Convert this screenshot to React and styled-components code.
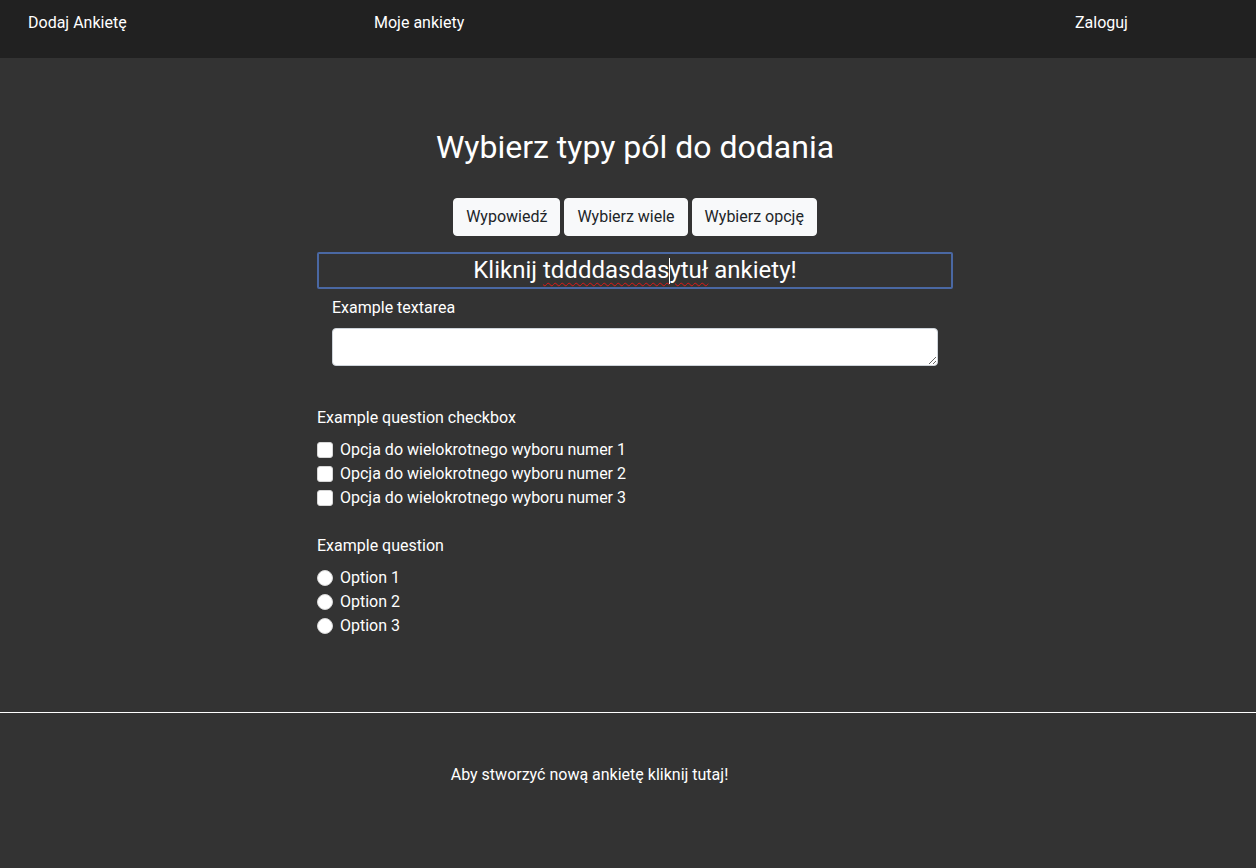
import React from "react";
import styled, { createGlobalStyle } from "styled-components";

const GlobalStyle = createGlobalStyle`
  html, body {
    margin: 0;
    padding: 0;
    background: #333333;
  }
  body {
    font-family: Roboto, "Liberation Sans", sans-serif;
    font-size: 16px;
    line-height: 24px;
    color: #ffffff;
  }
  * { box-sizing: border-box; }
`;

const Header = styled.header`
  height: 58px;
  background: #212121;
  display: grid;
  grid-template-columns: 346px 701px auto;
  padding: 11px 0 0 28px;
`;

const NavLink = styled.a`
  color: #ffffff;
  font-size: 16px;
  line-height: 24px;
  text-decoration: none;
`;

const Main = styled.main`
  padding: 70px 0 74px 317px;
`;

const Column = styled.div`
  width: 636px;
`;

const Title = styled.h2`
  margin: 0;
  font-size: 32px;
  line-height: 38px;
  font-weight: 400;
  text-align: center;
`;

const ButtonRow = styled.div`
  margin-top: 32px;
  display: flex;
  justify-content: center;
  gap: 4px;
`;

const LightButton = styled.button`
  font-family: inherit;
  font-size: 16px;
  line-height: 24px;
  padding: 6px 12px;
  height: 38px;
  color: #212529;
  background: #f8f9fa;
  border: 1px solid #f8f9fa;
  border-radius: 4px;
`;

const TitleField = styled.div`
  margin-top: 16px;
  height: 37px;
  border: 2px solid #4a68a3;
  border-radius: 2px;
  text-align: center;
  font-size: 24px;
  line-height: 32px;
  color: #ffffff;
`;

const Misspelled = styled.span`
  text-decoration: underline wavy #e01818;
  text-decoration-thickness: 1px;
  text-underline-offset: 4px;
`;

const Caret = styled.span`
  display: inline-block;
  width: 1px;
  height: 26px;
  margin-right: -1px;
  background: #ffffff;
  vertical-align: -6px;
`;

const FieldGroup = styled.div`
  padding: 7px 15px 0;
`;

const Label = styled.label`
  display: block;
  font-size: 16px;
  line-height: 24px;
  margin-bottom: 8px;
`;

const TextArea = styled.textarea`
  display: block;
  width: 100%;
  height: 38px;
  border: 1px solid #ced4da;
  border-radius: 4px;
  background: #ffffff;
  font-family: inherit;
  font-size: 16px;
  padding: 6px 12px;
`;

const Question = styled.fieldset`
  border: 0;
  padding: 0;
  margin: ${({ $top }) => $top}px 0 0;
`;

const QuestionTitle = styled.div`
  line-height: 24px;
  margin-bottom: 8px;
`;

const OptionRow = styled.label`
  display: flex;
  align-items: center;
  gap: 7px;
  height: 24px;
`;

const Box = styled.span`
  width: 16px;
  height: 16px;
  background: #ffffff;
  border: 1px solid #d6d6d6;
  border-radius: ${({ $round }) => ($round ? "50%" : "3px")};
`;

const Divider = styled.hr`
  margin: 0;
  border: 0;
  border-top: 1px solid #ffffff;
`;

const Footer = styled.footer`
  padding: 50px 77px 80px 0;
  text-align: center;
  line-height: 24px;
`;

const checkboxes = [
  "Opcja do wielokrotnego wyboru numer 1",
  "Opcja do wielokrotnego wyboru numer 2",
  "Opcja do wielokrotnego wyboru numer 3",
];
const radios = ["Option 1", "Option 2", "Option 3"];

export default function App() {
  return (
    <>
      <GlobalStyle />
      <Header>
        <NavLink>Dodaj Ankietę</NavLink>
        <NavLink>Moje ankiety</NavLink>
        <NavLink>Zaloguj</NavLink>
      </Header>
      <Main>
        <Column>
          <Title>Wybierz typy pól do dodania</Title>
          <ButtonRow>
            <LightButton>Wypowiedź</LightButton>
            <LightButton>Wybierz wiele</LightButton>
            <LightButton>Wybierz opcję</LightButton>
          </ButtonRow>
          <TitleField>
            Kliknij <Misspelled>tddddasdas<Caret />ytuł</Misspelled> ankiety!
          </TitleField>
          <FieldGroup>
            <Label>Example textarea</Label>
            <TextArea />
          </FieldGroup>
          <Question $top={40}>
            <QuestionTitle>Example question checkbox</QuestionTitle>
            {checkboxes.map((c) => (
              <OptionRow key={c}>
                <Box />
                {c}
              </OptionRow>
            ))}
          </Question>
          <Question $top={24}>
            <QuestionTitle>Example question</QuestionTitle>
            {radios.map((r) => (
              <OptionRow key={r}>
                <Box $round />
                {r}
              </OptionRow>
            ))}
          </Question>
        </Column>
      </Main>
      <Divider />
      <Footer>Aby stworzyć nową ankietę kliknij tutaj!</Footer>
    </>
  );
}
